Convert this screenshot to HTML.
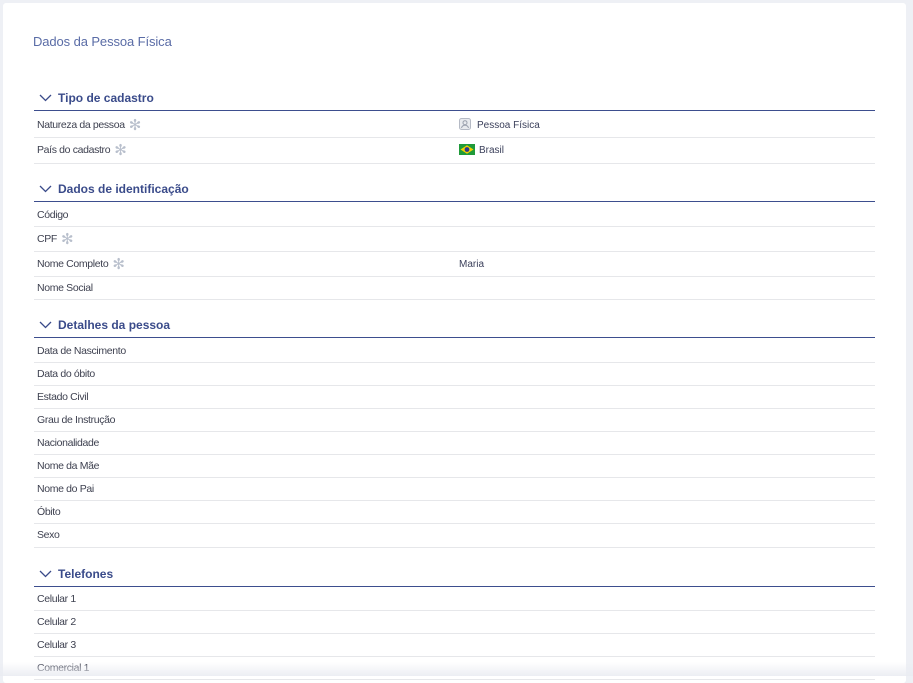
<!DOCTYPE html>
<html><head><meta charset="utf-8"><style>
*{margin:0;padding:0;box-sizing:border-box}
body{width:913px;height:676px;background:#eef0f5;font-family:"Liberation Sans",sans-serif;position:relative;overflow:hidden}
.card{position:absolute;left:3px;top:3px;width:903px;height:680px;background:#fff;border-radius:3px}
.fade{position:absolute;left:0;top:662px;width:913px;height:14px;background:linear-gradient(rgba(240,241,246,0),rgba(234,236,242,.9))}
.t{position:absolute;left:33px;top:34px;font-size:13px;color:#5a6ca6;letter-spacing:-0.1px}
.h{position:absolute;left:34px;width:841px;height:22px;border-bottom:1px solid #3d4e8e;font-size:12px;font-weight:bold;color:#3a4b8a;padding-left:24px;line-height:19px}
.h svg{position:absolute;left:5px;top:5px}
.r{position:absolute;left:34px;width:841px;height:23px;border-bottom:1px solid #e6e7ea;font-size:10.5px;letter-spacing:-0.35px;color:#3e4150;padding-left:3px;line-height:23px}
.s{color:#b8bfcc;font-size:15px;margin-left:4px;vertical-align:-2px}
.v{position:absolute;left:425px;top:1px;color:#3a3f5a;font-size:10px;letter-spacing:0}
</style></head><body>
<div class="card"></div>
<div class="t">Dados da Pessoa Física</div>

<div class="h" style="top:89px"><svg width="13" height="8" viewBox="0 0 13 8"><path d="M1 1l5.5 5.5L12 1" fill="none" stroke="#3a4b8a" stroke-width="1.3"/></svg>Tipo de cadastro</div>
<div class="r" style="top:113px;height:25px;line-height:24px">Natureza da pessoa<span class="s">✻</span><span class="v"><svg width="12" height="12" viewBox="0 0 12 12" style="vertical-align:-2px;margin-right:6px"><rect x="0.5" y="0.5" width="11" height="11" rx="2" fill="#e8eaee" stroke="#b5bac5"/><circle cx="6" cy="4.7" r="2" fill="none" stroke="#9aa0ad"/><path d="M2.5 10c.5-2 2-2.8 3.5-2.8S9 8 9.5 10" fill="none" stroke="#9aa0ad"/></svg>Pessoa Física</span></div>
<div class="r" style="top:138px;height:26px;line-height:24px">País do cadastro<span class="s">✻</span><span class="v"><svg width="16" height="11" viewBox="0 0 16 11" style="vertical-align:-2px;margin-right:4px"><rect width="16" height="11" fill="#1f9a3a"/><path d="M8 1.2L14.5 5.5 8 9.8 1.5 5.5z" fill="#f5d000"/><circle cx="8" cy="5.5" r="2.4" fill="#2a3a8a"/></svg>Brasil</span></div>

<div class="h" style="top:180px"><svg width="13" height="8" viewBox="0 0 13 8"><path d="M1 1l5.5 5.5L12 1" fill="none" stroke="#3a4b8a" stroke-width="1.3"/></svg>Dados de identificação</div>
<div class="r" style="top:204px">Código</div>
<div class="r" style="top:227px;height:25px;line-height:24px">CPF<span class="s">✻</span></div>
<div class="r" style="top:252px;height:25px;line-height:24px">Nome Completo<span class="s">✻</span><span class="v" style="line-height:24px">Maria</span></div>
<div class="r" style="top:277px">Nome Social</div>

<div class="h" style="top:316px"><svg width="13" height="8" viewBox="0 0 13 8"><path d="M1 1l5.5 5.5L12 1" fill="none" stroke="#3a4b8a" stroke-width="1.3"/></svg>Detalhes da pessoa</div>
<div class="r" style="top:340px">Data de Nascimento</div>
<div class="r" style="top:363px">Data do óbito</div>
<div class="r" style="top:386px">Estado Civil</div>
<div class="r" style="top:409px">Grau de Instrução</div>
<div class="r" style="top:432px">Nacionalidade</div>
<div class="r" style="top:455px">Nome da Mãe</div>
<div class="r" style="top:478px">Nome do Pai</div>
<div class="r" style="top:501px">Óbito</div>
<div class="r" style="top:524px;height:24px">Sexo</div>

<div class="h" style="top:565px"><svg width="13" height="8" viewBox="0 0 13 8"><path d="M1 1l5.5 5.5L12 1" fill="none" stroke="#3a4b8a" stroke-width="1.3"/></svg>Telefones</div>
<div class="r" style="top:588px">Celular 1</div>
<div class="r" style="top:611px">Celular 2</div>
<div class="r" style="top:634px">Celular 3</div>
<div class="r" style="top:657px">Comercial 1</div>
<div class="fade"></div>
</body></html>
